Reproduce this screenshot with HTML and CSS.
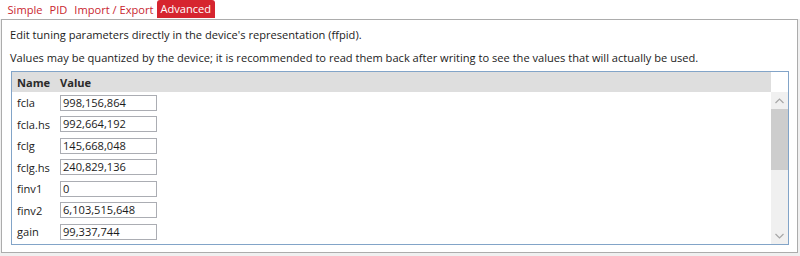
FILE: index.html
```html
<!DOCTYPE html>
<html>
<head>
<meta charset="utf-8">
<link rel="stylesheet" href="styles.css">
</head>
<body>
<div class="tabs">
  <span class="tab">Simple</span>
  <span class="tab">PID</span>
  <span class="tab">Import / Export</span>
  <span class="tab active">Advanced</span>
</div>
<div class="panel">
  <div class="intro">
    <p>Edit tuning parameters directly in the device's representation (ffpid).</p>
    <p>Values may be quantized by the device; it is recommended to read them back after writing to see the values that will actually be used.</p>
  </div>
  <div class="list">
    <div class="head">
      <div class="hcells"><span class="cname">Name</span><span class="cval">Value</span></div>
      <div class="hcorner"></div>
    </div>
    <div class="body">
      <div class="rows">
        <div class="row"><span class="cname">fcla</span><span class="cval"><span class="input">998,156,864</span></span></div>
        <div class="row"><span class="cname">fcla.hs</span><span class="cval"><span class="input">992,664,192</span></span></div>
        <div class="row"><span class="cname">fclg</span><span class="cval"><span class="input">145,668,048</span></span></div>
        <div class="row"><span class="cname">fclg.hs</span><span class="cval"><span class="input">240,829,136</span></span></div>
        <div class="row"><span class="cname">finv1</span><span class="cval"><span class="input">0</span></span></div>
        <div class="row"><span class="cname">finv2</span><span class="cval"><span class="input">6,103,515,648</span></span></div>
        <div class="row"><span class="cname">gain</span><span class="cval"><span class="input">99,337,744</span></span></div>
      </div>
      <div class="scrollbar">
        <div class="arrow">
          <svg width="9" height="6" viewBox="0 0 9 6"><path d="M0.5 5 L4.5 1 L8.5 5" fill="none" stroke="#a6a6a6" stroke-width="1.2"/></svg>
        </div>
        <div class="track"><div class="thumb"></div></div>
        <div class="arrow">
          <svg width="9" height="6" viewBox="0 0 9 6"><path d="M0.5 1 L4.5 5 L8.5 1" fill="none" stroke="#a6a6a6" stroke-width="1.2"/></svg>
        </div>
      </div>
    </div>
  </div>
</div>
</body>
</html>
```
FILE: styles.css
```css
html, body {
  margin: 0;
  padding: 0;
  background: #f0f0f0;
}
body {
  font-family: "Open Sans", "Noto Sans", sans-serif;
  font-size: 11.1px;
  color: #1b1b1b;
  width: 800px;
  height: 256px;
  overflow: hidden;
}
.tabs {
  display: flex;
  height: 19px;
  padding-left: 4px;
  background: #ffffff;
  gap: 0;
}
.tab {
  padding: 0 3.5px;
  line-height: 19px;
  color: #c9262f;
}
.tab.active {
  background: #d6252f;
  color: #ffffff;
  border-radius: 3px 3px 0 0;
  height: 18px;
  line-height: 18px;
}
.panel {
  margin-left: 1px;
  width: 795px;
  height: 232px;
  border: 1px solid #acacac;
  background: #ffffff;
}
.intro {
  padding: 3px 0 0 8px;
}
.intro p {
  margin: 0;
  line-height: 23px;
}
.list {
  margin: 2px 0 0 9px;
  width: 776px;
  height: 172px;
  border: 1px solid #82a4c8;
  display: flex;
  flex-direction: column;
}
.head {
  display: flex;
  height: 20px;
}
.hcells {
  flex: 1;
  background: #dedede;
  display: flex;
  align-items: center;
  font-weight: bold;
  color: #2a2a2a;
}
.hcorner {
  width: 17px;
  background: #ffffff;
}
.cname {
  width: 43px;
  padding-left: 5px;
}
.cval {
  flex: 1;
}
.body {
  flex: 1;
  display: flex;
  min-height: 0;
}
.rows {
  flex: 1;
}
.row {
  height: 21.5px;
  display: flex;
  align-items: center;
}
.input {
  display: block;
  box-sizing: border-box;
  width: 97px;
  height: 16px;
  border: 1px solid #abadb3;
  line-height: 14px;
  padding-left: 2px;
  color: #1b1b1b;
}
.scrollbar {
  width: 17px;
  background: #f0f0f0;
  display: flex;
  flex-direction: column;
}
.arrow {
  height: 17px;
  display: flex;
  align-items: center;
  justify-content: center;
}
.track {
  flex: 1;
}
.thumb {
  height: 61px;
  background: #cdcdcd;
}
```
